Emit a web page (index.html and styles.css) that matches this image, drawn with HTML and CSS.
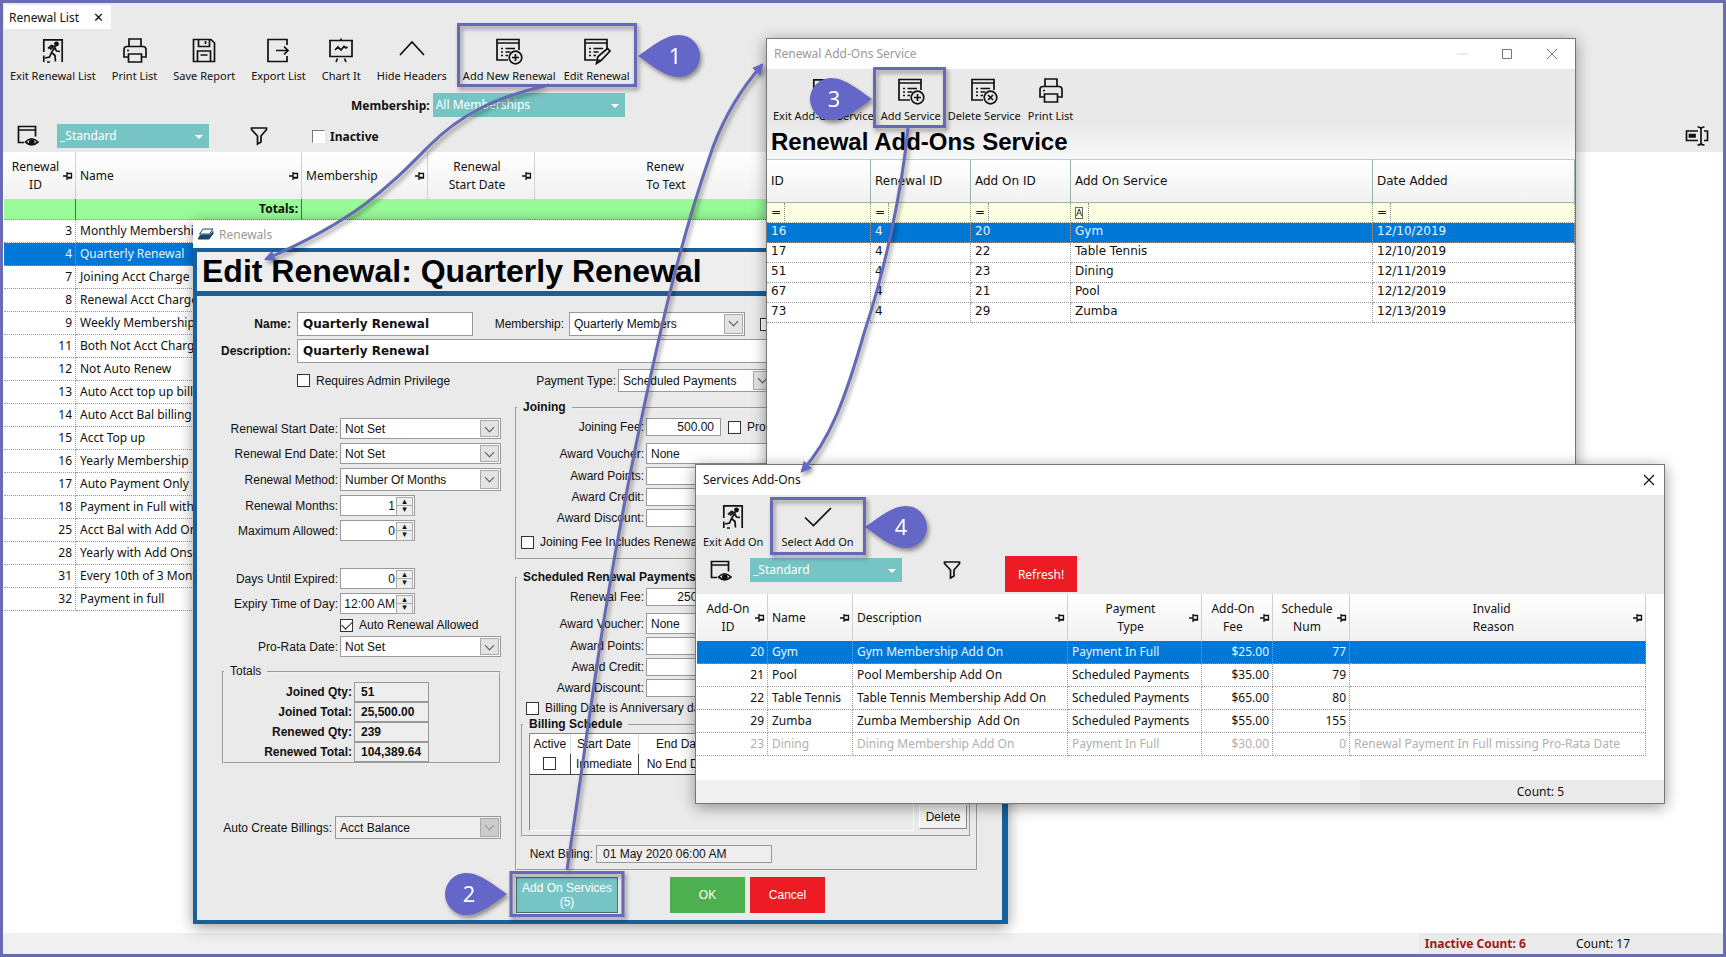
FILE: index.html
```html
<!DOCTYPE html>
<html lang="en">
<head>
  <meta charset="UTF-8" />
  <meta name="viewport" content="width=device-width, initial-scale=1.0" />
  <title>Renewal List</title>
  <link rel="stylesheet" href="styles.css">
</head>
<body>
  <svg class="sprite" aria-hidden="true">
    <symbol id="i-exit" viewBox="0 0 28 28">
      <path d="M4.800 15V2.800H23.200V25M4.800 18.500V25M8 25h3" />
      <circle cx="17.500" cy="7" r="1.600" class="solid" />
      <path d="M9 11.500l3.500-3 3.500 1.500-3.500 5.500 3.500 3 .5 6M12.500 15.500l-2 4.500-4.500 1M15.500 10.500l2 3.500 3.500.5M11 12.500l3-2.500" />
    </symbol>
    <symbol id="i-print" viewBox="0 0 28 28">
      <path d="M8 9V2h12v7M7 20H3V12.500Q3 9.500 6 9.500H22Q25 9.500 25 12.500V20H21M7.500 17h13v8h-13z" />
      <path d="M6 13.500h2" />
    </symbol>
    <symbol id="i-save" viewBox="0 0 28 28">
      <path d="M3.500 2.500H21L24.500 6V24.500H3.500zM8.500 2.500V9.500H19.500V2.500M15.500 4v3M7.500 24.500V14H20.500V24.500M10.500 18h7" />
    </symbol>
    <symbol id="i-export" viewBox="0 0 28 28">
      <path d="M23 8V2.500H4V24.500H23V19M12 13.500H24M20 9.500l4 4-4 4" />
    </symbol>
    <symbol id="i-chart" viewBox="0 0 28 28">
      <path d="M2 3.500H26M3 3.500V19.500H25V3.500M10.500 21.500L9 25M17.500 21.500L19 25M14 1.500v2M8 13l3-3 3 3 3-3.500 2 1.500 1.500-1" />
    </symbol>
    <symbol id="i-up" viewBox="0 0 28 28">
      <path d="M2 18L14 5L26 18" />
    </symbol>
    <symbol id="i-list" viewBox="0 0 28 28">
      <path d="M13 23H2V2.500H24V13M2 6H24M6 11.500h2M10.500 11.500H20M6 15h2M10.500 15h5M6 18.500h2M10.500 18.500h2.500" />
    </symbol>
    <symbol id="i-add" viewBox="0 0 28 28">
      <use href="#i-list" />
      <circle cx="20.500" cy="20.500" r="6.300" />
      <path d="M20.500 17v7M17 20.500h7" />
    </symbol>
    <symbol id="i-delete" viewBox="0 0 28 28">
      <use href="#i-list" />
      <circle cx="20.500" cy="20.500" r="6.300" />
      <path d="M18 18l5 5M23 18l-5 5" />
    </symbol>
    <symbol id="i-edit" viewBox="0 0 28 28">
      <use href="#i-list" />
      <path d="M14 23l1-3.500 9.500-8 2.500 2.500-9 9.500zM14 23l-.5 3.500 4.500-3" />
    </symbol>
    <symbol id="i-check" viewBox="0 0 28 28">
      <path d="M1 14.500l8.500 8L27 5" />
    </symbol>
    <symbol id="i-view" viewBox="0 0 22 22">
      <path d="M7 17.500H1.500V1.500H18.500V11.500M1.500 5H18.500M8.500 17q6-6.500 12.500 0q-6.500 5.500-12.500 0z" />
      <circle cx="14.800" cy="17" r="2" class="solid" />
    </symbol>
    <symbol id="i-funnel" viewBox="0 0 18 20">
      <path d="M1.500 2H16.500V3.500L11 10V16L7.500 18V10L1.500 3.500z" />
    </symbol>
    <symbol id="i-ibeam" viewBox="0 0 24 20">
      <path d="M13 5H1.500V14.500H13M19 5H22.500V14.500H19M16 2V18M12.500 1Q16 1 16 3Q16 1 19.500 1M12.500 19Q16 19 16 17Q16 19 19.500 19M4 9.700H10" />
      <path d="M4.500 8.500h5.500v2.500h-5.500z" class="solid" />
    </symbol>
    <symbol id="i-pin" viewBox="0 0 10 8">
      <path d="M0 4H4M4 0V8M4 1.500H8.500V5.500H4M4 6H9" />
    </symbol>
  </svg>

  <div class="app">
    <div class="tabs">
      <div class="tab">Renewal List <button class="tab-close" aria-label="Close tab">✕</button></div>
    </div>

    <div class="head">
      <div class="toolbar">
        <button class="tool"><svg><use href="#i-exit" /></svg>Exit Renewal List</button>
        <button class="tool"><svg><use href="#i-print" /></svg>Print List</button>
        <button class="tool"><svg><use href="#i-save" /></svg>Save Report</button>
        <button class="tool"><svg><use href="#i-export" /></svg>Export List</button>
        <button class="tool"><svg><use href="#i-chart" /></svg>Chart It</button>
        <button class="tool"><svg><use href="#i-up" /></svg>Hide Headers</button>
        <div class="tool-group">
          <button class="tool"><svg><use href="#i-add" /></svg>Add New Renewal</button>
          <button class="tool"><svg><use href="#i-edit" /></svg>Edit Renewal</button>
        </div>
      </div>
      <div class="member-row">
        <label for="listMembership">Membership:</label>
        <span class="teal-select wide"><select id="listMembership"><option>All Memberships</option></select></span>
      </div>
      <div class="filter-row">
        <svg class="view-icon"><use href="#i-view" /></svg>
        <span class="teal-select"><select aria-label="View"><option>_Standard</option></select></span>
        <svg class="funnel-icon"><use href="#i-funnel" /></svg>
        <input type="checkbox" class="sunken" id="inactive">
        <label for="inactive">Inactive</label>
        <svg class="ibeam-icon"><use href="#i-ibeam" /></svg>
      </div>
    </div>

    <div class="list">
      <table class="grid renewal-grid">
        <colgroup><col class="c-id"><col class="c-name"><col class="c-member"><col class="c-start"><col class="c-text"></colgroup>
        <thead>
          <tr>
            <th><div class="th center"><span>Renewal<br>ID</span><svg><use href="#i-pin" /></svg></div></th>
            <th><div class="th"><span>Name</span><svg><use href="#i-pin" /></svg></div></th>
            <th><div class="th"><span>Membership</span><svg><use href="#i-pin" /></svg></div></th>
            <th><div class="th center"><span>Renewal<br>Start Date</span><svg><use href="#i-pin" /></svg></div></th>
            <th><div class="th center"><span class="left">Renew<br>To Text</span></div></th>
          </tr>
          <tr class="totals-row"><td></td><td class="num">Totals:</td><td></td><td></td><td></td></tr>
        </thead>
        <tbody>
          <tr><td class="num">3</td><td>Monthly Membership</td><td></td><td></td><td></td></tr>
          <tr class="selected"><td class="num">4</td><td>Quarterly Renewal</td><td></td><td></td><td></td></tr>
          <tr><td class="num">7</td><td>Joining Acct Charge</td><td></td><td></td><td></td></tr>
          <tr><td class="num">8</td><td>Renewal Acct Charge</td><td></td><td></td><td></td></tr>
          <tr><td class="num">9</td><td>Weekly Membership</td><td></td><td></td><td></td></tr>
          <tr><td class="num">11</td><td>Both Not Acct Charge</td><td></td><td></td><td></td></tr>
          <tr><td class="num">12</td><td>Not Auto Renew</td><td></td><td></td><td></td></tr>
          <tr><td class="num">13</td><td>Auto Acct top up billing</td><td></td><td></td><td></td></tr>
          <tr><td class="num">14</td><td>Auto Acct Bal billing</td><td></td><td></td><td></td></tr>
          <tr><td class="num">15</td><td>Acct Top up</td><td></td><td></td><td></td></tr>
          <tr><td class="num">16</td><td>Yearly Membership</td><td></td><td></td><td></td></tr>
          <tr><td class="num">17</td><td>Auto Payment Only</td><td></td><td></td><td></td></tr>
          <tr><td class="num">18</td><td>Payment in Full with</td><td></td><td></td><td></td></tr>
          <tr><td class="num">25</td><td>Acct Bal with Add On</td><td></td><td></td><td></td></tr>
          <tr><td class="num">28</td><td>Yearly with Add Ons</td><td></td><td></td><td></td></tr>
          <tr><td class="num">31</td><td>Every 10th of 3 Months</td><td></td><td></td><td></td></tr>
          <tr><td class="num">32</td><td>Payment in full</td><td></td><td></td><td></td></tr>
        </tbody>
      </table>
    </div>

    <div class="statusbar">
      <span class="inactive-count">Inactive Count: 6</span>
      <span class="count">Count: 17</span>
    </div>

    <!-- Edit renewal window -->
    <div class="window win-edit">
      <div class="titlebar muted">
        <svg class="logo" viewBox="0 0 16 12"><path d="M5 1H15L11.500 6H1.500z" class="logo-top" /><path d="M3.500 7H12L15 3.500V5.500L11 11H0L2.500 7z" class="logo-base" /></svg>
        Renewals
      </div>
      <form class="edit-frame">
        <h1>Edit Renewal: Quarterly Renewal</h1>
        <div class="edit-body">
          <div class="row top">
            <label class="bold" for="rName">Name:</label>
            <input class="strong name" id="rName" value="Quarterly Renewal">
            <label class="second" for="rMember">Membership:</label>
            <span class="combo tall name"><select id="rMember"><option>Quarterly Members</option></select></span>
            <input type="checkbox" class="after-combo" aria-label="Membership option">
          </div>
          <div class="row top">
            <label class="bold" for="rDesc">Description:</label>
            <input class="strong desc" id="rDesc" value="Quarterly Renewal">
          </div>
          <div class="row top admin-row">
            <label class="check"><input type="checkbox"> Requires Admin Privilege</label>
            <label class="push" for="rPay">Payment Type:</label>
            <span class="combo tall pay"><select id="rPay"><option>Scheduled Payments</option></select></span>
          </div>

          <div class="columns">
            <div class="col-left">
              <div class="row"><label for="sDate">Renewal Start Date:</label><span class="combo"><select id="sDate"><option>Not Set</option></select></span></div>
              <div class="row"><label for="eDate">Renewal End Date:</label><span class="combo"><select id="eDate"><option>Not Set</option></select></span></div>
              <div class="row"><label for="method">Renewal Method:</label><span class="combo tall"><select id="method"><option>Number Of Months</option></select></span></div>
              <div class="row"><label for="months">Renewal Months:</label><span class="spin"><input id="months" value="1"></span></div>
              <div class="row"><label for="maxAllowed">Maximum Allowed:</label><span class="spin"><input id="maxAllowed" value="0"></span></div>
              <div class="row spaced"><label for="days">Days Until Expired:</label><span class="spin"><input id="days" value="0"></span></div>
              <div class="row"><label for="expiry">Expiry Time of Day:</label><span class="spin"><input id="expiry" value="12:00 AM"></span></div>
              <div class="row check-row"><label class="check"><input type="checkbox" checked> Auto Renewal Allowed</label></div>
              <div class="row"><label for="prorata">Pro-Rata Date:</label><span class="combo"><select id="prorata"><option>Not Set</option></select></span></div>
              <fieldset class="totals">
                <legend>Totals</legend>
                <div class="row"><label for="t1">Joined Qty:</label><input id="t1" readonly value="51"></div>
                <div class="row"><label for="t2">Joined Total:</label><input id="t2" readonly value="25,500.00"></div>
                <div class="row"><label for="t3">Renewed Qty:</label><input id="t3" readonly value="239"></div>
                <div class="row"><label for="t4">Renewed Total:</label><input id="t4" readonly value="104,389.64"></div>
              </fieldset>
              <div class="row auto-row"><label for="auto">Auto Create Billings:</label><span class="combo tall disabled"><select id="auto" disabled><option>Acct Balance</option></select></span></div>
            </div>

            <div class="col-right">
              <fieldset class="joining">
                <legend class="bold">Joining</legend>
                <div class="row"><label for="jFee">Joining Fee:</label><input class="money" id="jFee" value="500.00"><label class="check pro"><input type="checkbox"> Pro-Rata</label></div>
                <div class="row voucher"><label for="jVoucher">Award Voucher:</label><span class="combo"><select id="jVoucher"><option>None</option></select></span></div>
                <div class="row"><label for="jPoints">Award Points:</label><input class="money" id="jPoints"></div>
                <div class="row"><label for="jCredit">Award Credit:</label><input class="money" id="jCredit"></div>
                <div class="row"><label for="jDiscount">Award Discount:</label><input class="money" id="jDiscount"></div>
                <label class="check"><input type="checkbox"> Joining Fee Includes Renewal</label>
              </fieldset>
              <fieldset class="scheduled">
                <legend class="bold">Scheduled Renewal Payments</legend>
                <div class="row"><label for="sFee">Renewal Fee:</label><input class="money" id="sFee" value="250.00"></div>
                <div class="row voucher"><label for="sVoucher">Award Voucher:</label><span class="combo"><select id="sVoucher"><option>None</option></select></span></div>
                <div class="row"><label for="sPoints">Award Points:</label><input class="money" id="sPoints"></div>
                <div class="row"><label for="sCredit">Award Credit:</label><input class="money" id="sCredit"></div>
                <div class="row"><label for="sDiscount">Award Discount:</label><input class="money" id="sDiscount"></div>
                <label class="check"><input type="checkbox"> Billing Date is Anniversary date</label>
                <fieldset class="billing">
                  <legend class="bold">Billing Schedule</legend>
                  <div class="schedule">
                    <table>
                      <colgroup><col class="s-active"><col class="s-start"><col class="s-end"><col></colgroup>
                      <thead><tr><th>Active</th><th>Start Date</th><th>End Date</th><th></th></tr></thead>
                      <tbody><tr><td><input type="checkbox" aria-label="Active"></td><td>Immediate</td><td>No End Date</td><td></td></tr></tbody>
                    </table>
                  </div>
                  <button type="button" class="delete">Delete</button>
                </fieldset>
                <div class="row next"><label for="next">Next Billing:</label><input id="next" readonly value="01 May 2020 06:00 AM"></div>
              </fieldset>
            </div>
          </div>

          <div class="actions">
            <button type="button" class="btn addon">Add On Services<br>(5)</button>
            <button type="button" class="btn ok">OK</button>
            <button type="button" class="btn cancel">Cancel</button>
          </div>
        </div>
      </form>
    </div>

    <!-- Add-ons service window -->
    <div class="window win-addons">
      <div class="titlebar muted">
        Renewal Add-Ons Service
        <svg class="win-controls" viewBox="0 0 106 12"><path d="M1 6h11" class="faint" /><path d="M46.500 1.500h9v9h-9zM91 1l10 10M101 1L91 11" /></svg>
      </div>
      <div class="addons-head">
        <div class="toolbar">
          <button class="tool"><svg><use href="#i-exit" /></svg>Exit Add-On Service</button>
          <button class="tool"><svg><use href="#i-add" /></svg>Add Service</button>
          <button class="tool"><svg><use href="#i-delete" /></svg>Delete Service</button>
          <button class="tool"><svg><use href="#i-print" /></svg>Print List</button>
        </div>
        <h2>Renewal Add-Ons Service</h2>
      </div>
      <table class="grid addons-grid">
        <colgroup><col class="a-id"><col class="a-renewal"><col class="a-addon"><col class="a-service"><col></colgroup>
        <thead>
          <tr><th>ID</th><th>Renewal ID</th><th>Add On ID</th><th>Add On Service</th><th>Date Added</th></tr>
          <tr class="filters"><td><span>=</span></td><td><span>=</span></td><td><span>=</span></td><td><span><b>A</b></span></td><td><span>=</span></td></tr>
        </thead>
        <tbody>
          <tr class="selected"><td>16</td><td>4</td><td>20</td><td>Gym</td><td>12/10/2019</td></tr>
          <tr><td>17</td><td>4</td><td>22</td><td>Table Tennis</td><td>12/10/2019</td></tr>
          <tr><td>51</td><td>4</td><td>23</td><td>Dining</td><td>12/11/2019</td></tr>
          <tr><td>67</td><td>4</td><td>21</td><td>Pool</td><td>12/12/2019</td></tr>
          <tr><td>73</td><td>4</td><td>29</td><td>Zumba</td><td>12/13/2019</td></tr>
        </tbody>
      </table>
    </div>

    <!-- Services add-ons picker -->
    <div class="window win-services">
      <div class="titlebar">
        Services Add-Ons
        <svg class="win-close" viewBox="0 0 12 12"><path d="M1 1l10 10M11 1L1 11" /></svg>
      </div>
      <div class="services-head">
        <div class="toolbar">
          <button class="tool"><svg><use href="#i-exit" /></svg>Exit Add On</button>
          <button class="tool"><svg><use href="#i-check" /></svg>Select Add On</button>
        </div>
        <div class="filter-row">
          <svg class="view-icon"><use href="#i-view" /></svg>
          <span class="teal-select"><select aria-label="View"><option>_Standard</option></select></span>
          <svg class="funnel-icon"><use href="#i-funnel" /></svg>
          <button class="btn cancel refresh">Refresh!</button>
        </div>
      </div>
      <table class="grid services-grid">
        <colgroup><col class="v-id"><col class="v-name"><col class="v-desc"><col class="v-pay"><col class="v-fee"><col class="v-num"><col class="v-reason"></colgroup>
        <thead>
          <tr>
            <th><div class="th center"><span>Add-On<br>ID</span><svg><use href="#i-pin" /></svg></div></th>
            <th><div class="th"><span>Name</span><svg><use href="#i-pin" /></svg></div></th>
            <th><div class="th"><span>Description</span><svg><use href="#i-pin" /></svg></div></th>
            <th><div class="th center"><span>Payment<br>Type</span><svg><use href="#i-pin" /></svg></div></th>
            <th><div class="th center"><span>Add-On<br>Fee</span><svg><use href="#i-pin" /></svg></div></th>
            <th><div class="th center"><span>Schedule<br>Num</span><svg><use href="#i-pin" /></svg></div></th>
            <th><div class="th center"><span class="left">Invalid<br>Reason</span><svg><use href="#i-pin" /></svg></div></th>
          </tr>
        </thead>
        <tbody>
          <tr class="selected"><td class="num">20</td><td>Gym</td><td>Gym Membership Add On</td><td>Payment In Full</td><td class="num">$25.00</td><td class="num">77</td><td></td></tr>
          <tr><td class="num">21</td><td>Pool</td><td>Pool Membership Add On</td><td>Scheduled Payments</td><td class="num">$35.00</td><td class="num">79</td><td></td></tr>
          <tr><td class="num">22</td><td>Table Tennis</td><td>Table Tennis Membership Add On</td><td>Scheduled Payments</td><td class="num">$65.00</td><td class="num">80</td><td></td></tr>
          <tr><td class="num">29</td><td>Zumba</td><td>Zumba Membership&nbsp; Add On</td><td>Scheduled Payments</td><td class="num">$55.00</td><td class="num">155</td><td></td></tr>
          <tr class="off"><td class="num">23</td><td>Dining</td><td>Dining Membership Add On</td><td>Payment In Full</td><td class="num">$30.00</td><td class="num">0</td><td>Renewal Payment In Full missing Pro-Rata Date</td></tr>
        </tbody>
      </table>
      <div class="services-status"><span>Count: 5</span></div>
    </div>

    <!-- numbered callouts -->
    <svg class="callouts" width="1726" height="957" viewBox="0 0 1726 957">
      <defs>
        <marker id="head" viewBox="0 0 10 10" refX="8" refY="5" markerWidth="11" markerHeight="11" markerUnits="userSpaceOnUse" orient="auto"><path d="M0 0L10 5L0 10z" /></marker>
        <path id="pinL" d="M-41 0C-30-7-15-21 0-21A21 21 0 0 1 0 21C-15 21-30 7-41 0z" />
        <path id="pinR" d="M41 0C30-7 15-21 0-21A21 21 0 0 0 0 21C15 21 30 7 41 0z" />
      </defs>
      <g class="frames">
        <rect x="458.500" y="24.500" width="177" height="61" />
        <rect x="511" y="872.500" width="112" height="43" />
        <rect x="874.500" y="68.500" width="70" height="58" />
        <rect x="771.500" y="498.500" width="93" height="55" />
      </g>
      <g class="arrows">
        <path d="M549 85C495 97 460 115 430 145C390 185 360 218 266 259" />
        <path d="M567 870C590 720 600 620 637 440C660 330 680 240 713 147C725 115 740 90 762 65" />
        <path d="M908 128C902 190 885 270 865 330C845 400 830 440 802 471" />
      </g>
      <g class="pins">
        <use href="#pinL" x="679" y="56" />
        <use href="#pinR" x="466" y="894" />
        <use href="#pinR" x="831" y="99" />
        <use href="#pinL" x="906" y="527" />
      </g>
      <g class="numbers">
        <text x="675" y="64">1</text>
        <text x="469" y="902">2</text>
        <text x="834" y="107">3</text>
        <text x="901" y="535">4</text>
      </g>
    </svg>
  </div>
</body>
</html>
```

FILE: styles.css
```css
* {
  box-sizing: border-box;
}
body {
  margin: 0;
  font-family: "Noto Sans", "Open Sans", sans-serif;
  font-size: 12px;
  color: #111;
}
button, input, select {
  font: inherit;
  color: inherit;
  margin: 0;
  border-radius: 0;
}
button {
  border: none;
  background: none;
  padding: 0;
  cursor: pointer;
}
svg {
  fill: none;
  stroke: #111;
  stroke-width: 1.7;
  flex: none;
}
.solid {
  fill: #111;
}
.sprite {
  position: absolute;
  width: 0;
  height: 0;
}
.app {
  position: relative;
  display: flex;
  flex-direction: column;
  min-height: 100vh;
  border: 3px solid #6b6bb5;
  background: #fff;
  overflow: hidden;
}
.tabs {
  padding: 2px 1px 0;
  background: #eaeaea;
}
.tab {
  display: inline-flex;
  align-items: center;
  gap: 14px;
  height: 24px;
  padding: 0 7px 0 5px;
  background: #fff;
}
.tab-close {
  font-family: "DejaVu Sans", sans-serif;
  font-size: 13px;
  font-weight: bold;
}

/* toolbars */
.head {
  background: #eaeaea;
}
.toolbar {
  display: flex;
  gap: 16px;
  padding: 8px 7px 0;
}
.tool-group {
  display: flex;
  gap: 8px;
}
.tool {
  display: flex;
  flex-direction: column;
  align-items: center;
  gap: 3px;
  font-size: 11px;
  line-height: 15px;
  white-space: nowrap;
}
.tool svg {
  width: 28px;
  height: 28px;
}
.member-row {
  display: flex;
  align-items: center;
  gap: 3px;
  padding: 10px 0 0 348px;
  font-weight: bold;
}
.filter-row {
  display: flex;
  align-items: center;
  padding: 7px 14px 4px;
}
.filter-row label {
  font-weight: bold;
}
.teal-select {
  position: relative;
  display: block;
  width: 152px;
  height: 24px;
  background: #76c5c4;
  color: #fff;
  font-weight: normal;
}
.teal-select.wide {
  width: 192px;
}
.teal-select select {
  width: 100%;
  height: 100%;
  padding: 0 3px 2px;
  border: none;
  background: none;
  appearance: none;
}
.teal-select::after {
  content: "";
  position: absolute;
  right: 6px;
  top: 11px;
  border: 4px solid transparent;
  border-top-color: #fff;
  border-bottom: none;
}
.view-icon {
  width: 22px;
  height: 22px;
  margin-right: 18px;
}
.funnel-icon {
  width: 18px;
  height: 20px;
  margin: 0 44px 0 41px;
}
.ibeam-icon {
  width: 24px;
  height: 20px;
  margin-left: auto;
}
input[type="checkbox"] {
  position: relative;
  appearance: none;
  width: 13px;
  height: 13px;
  border: 1px solid #333;
  background: #fff;
  flex: none;
}
input[type="checkbox"]:checked::after {
  content: "";
  position: absolute;
  left: 1px;
  top: 1px;
  width: 9px;
  height: 5px;
  border: solid #222;
  border-width: 0 0 1px 1px;
  transform: rotate(-45deg);
}
input.sunken[type="checkbox"] {
  margin-right: 5px;
  border-color: #777 #fff #fff #777;
}

/* grids */
.list {
  flex: 1;
}
.grid {
  border-collapse: separate;
  border-spacing: 0;
  table-layout: fixed;
}
.grid th {
  height: 47px;
  padding: 0 2px 0 4px;
  border-right: 1px solid #d0d0d0;
  background: linear-gradient(#fff, #f1f1f1);
  font-weight: normal;
  line-height: 18px;
  text-align: left;
}
.th {
  display: flex;
  align-items: center;
  justify-content: space-between;
}
.th.center span {
  flex: 1;
  text-align: center;
}
.th.center .left {
  flex: none;
  margin: 0 auto;
  text-align: left;
}
.th svg {
  width: 10px;
  height: 8px;
  stroke-width: 1.3;
}
.grid td {
  height: 23px;
  padding: 0 4px 2px;
  border-right: 1px dotted #999;
  border-bottom: 1px dotted #999;
  white-space: nowrap;
  overflow: hidden;
}
.grid .num {
  padding: 0 3px 2px;
  text-align: right;
}
.grid .selected td {
  background: #0078d7;
  color: #e6f3ff;
}
.grid .off td {
  color: #b0b0b0;
}
.renewal-grid {
  width: 792px;
  margin-left: 1px;
}
.c-id { width: 72px; }
.c-name { width: 226px; }
.c-member { width: 126px; }
.c-start { width: 107px; }
.c-text { width: 261px; }
.totals-row td {
  height: 21px;
  background: #98fb98;
  border-right: 1px solid #3b7a3b;
  font-weight: bold;
}
.totals-row td:nth-child(n+3) {
  border-right: none;
}
.statusbar {
  display: flex;
  justify-content: flex-end;
  align-items: center;
  height: 21px;
  padding-right: 93px;
  background: linear-gradient(to left, #eaeaea 304px, #f0f0f0 304px);
}
.inactive-count {
  margin-right: 50px;
  color: #a01818;
  font-weight: bold;
}

/* windows */
.window {
  position: absolute;
  background: #fff;
  border: 1px solid #777;
  box-shadow: 0 3px 14px rgba(0, 0, 0, 0.4);
}
.titlebar {
  display: flex;
  align-items: center;
  height: 30px;
  padding: 0 7px 1px;
  background: #fff;
  font-size: 12px;
}
.titlebar.muted {
  color: #999;
}
.win-controls {
  width: 106px;
  height: 12px;
  margin: 0 6px 0 auto;
  stroke: #777;
  stroke-width: 1;
}
.win-controls .faint {
  stroke: #ddd;
}
.win-close {
  width: 12px;
  height: 12px;
  margin: 0 2px 0 auto;
  stroke-width: 1.2;
}

/* edit renewal */
.win-edit {
  left: 190px;
  top: 217px;
  width: 815px;
  border: none;
}
.win-edit .titlebar {
  height: 28px;
  gap: 5px;
  padding: 0 5px;
}
.logo {
  width: 16px;
  height: 12px;
  stroke: #17446f;
  stroke-width: 1;
}
.logo-base {
  fill: #17446f;
}
.edit-frame {
  border: 4px solid #17609a;
  border-right-width: 6px;
  background: #eaeaea;
  font-family: "Liberation Sans", Arial, sans-serif;
  font-size: 12px;
}
.edit-frame h1 {
  margin: 0;
  padding-left: 5px;
  height: 44px;
  border-bottom: 5px solid #17609a;
  background: #eee;
  color: #000;
  font-size: 32px;
  line-height: 38px;
}
.edit-body {
  padding: 16px 0 7px 1px;
  box-shadow: inset 0 0 0 1px #dcebf7;
}
.row {
  display: flex;
  align-items: center;
}
.row > label:first-child {
  width: 140px;
  margin-right: 2px;
  text-align: right;
  white-space: nowrap;
}
.bold,
.edit-body legend.bold {
  font-weight: bold;
}
.row.top {
  margin-bottom: 3px;
}
.row.top > label.bold {
  width: 93px;
  margin-right: 6px;
}
.edit-body input:not([type="checkbox"]) {
  height: 18px;
  padding: 0 6px;
  border: 1px solid #999;
  background: #fff;
}
.edit-body input[readonly] {
  background: #eee;
}
.edit-body input.strong {
  height: 24px;
  padding: 0 5px;
  font-family: "DejaVu Sans", Verdana, sans-serif;
  font-size: 12px;
  font-weight: bold;
}
.name {
  width: 176px;
}
.desc {
  width: 680px;
}
.second {
  width: 91px;
  margin-right: 5px;
  text-align: right;
}
.after-combo {
  margin-left: 15px;
}
.check {
  display: flex;
  align-items: center;
  gap: 6px;
  white-space: nowrap;
}
.combo {
  position: relative;
  display: block;
  width: 161px;
  height: 21px;
}
.combo.tall {
  height: 23px;
}
.combo select {
  width: 100%;
  height: 100%;
  padding: 0 4px;
  border: 1px solid #999;
  background: #fff;
  appearance: none;
}
.combo::before {
  content: "";
  position: absolute;
  right: 2px;
  top: 2px;
  bottom: 2px;
  width: 17px;
  border: 1px solid #aaa;
  background: #e3e3e3;
  pointer-events: none;
}
.combo::after {
  content: "";
  position: absolute;
  right: 8px;
  top: 6px;
  width: 6px;
  height: 6px;
  border: solid #555;
  border-width: 0 1px 1px 0;
  transform: rotate(45deg);
  pointer-events: none;
}
.combo.disabled select {
  background: #eee;
  color: #111;
  opacity: 1;
}
.combo.disabled::before {
  background: #ccc;
}
.combo.disabled::after {
  border-color: #999;
}
.combo.name {
  width: 176px;
  height: 24px;
}
.row.admin-row {
  margin: 6px 0 8px;
  padding-left: 99px;
}
.row.admin-row > label:first-child {
  width: 200px;
}
.push {
  width: 117px;
  margin-right: 2px;
  text-align: right;
}
.pay {
  width: 156px;
}
.spin {
  position: relative;
  display: block;
  width: 75px;
}
.edit-body .spin input {
  display: block;
  width: 75px;
  height: 21px;
  padding: 0 19px 0 1px;
  text-align: right;
}
.spin::before,
.spin::after {
  content: "▴";
  position: absolute;
  right: 2px;
  top: 2px;
  width: 15px;
  height: 9px;
  border: 1px solid #aaa;
  background: #eee;
  font-family: "DejaVu Sans", sans-serif;
  font-size: 9px;
  line-height: 7px;
  text-align: center;
}
.spin::after {
  content: "▾";
  top: 10px;
}
.columns {
  display: flex;
}
.col-left {
  display: flex;
  flex-direction: column;
  gap: 4px;
  width: 317px;
  padding-top: 18px;
}
.row.spaced {
  margin-top: 23px;
}
.check-row {
  height: 14px;
  padding-left: 142px;
}
.row.check-row > label {
  width: auto;
}
fieldset {
  margin: 0;
  padding: 3px 0 9px;
  border: 2px groove #eee;
  min-width: 0;
}
legend {
  padding: 0 6px;
  line-height: 15px;
}
.totals {
  width: 279px;
  margin: 3px 0 0 24px;
  padding: 3px 0 0;
}
.totals .row,
.edit-body .totals input {
  height: 20px;
  font-weight: bold;
}
.totals .row > label:first-child {
  width: 128px;
}
.edit-body .totals input {
  width: 75px;
}
.auto-row {
  margin-top: 48px;
}
.row.auto-row > label:first-child {
  width: 134px;
  margin-right: 3px;
}
.auto-row .combo {
  width: 166px;
}
.col-right {
  display: flex;
  flex-direction: column;
  gap: 10px;
  width: 463px;
}
.joining .row,
.scheduled .row {
  margin-bottom: 3px;
}
.joining .row > label:first-child,
.scheduled .row > label:first-child {
  width: 127px;
}
.edit-body .money {
  width: 75px;
  text-align: right;
}
.joining .row.voucher,
.scheduled .row.voucher {
  margin-top: 7px;
}
.pro {
  margin-left: 7px;
}
.joining > .check {
  padding: 6px 0 0 4px;
}
.scheduled > .check {
  padding: 2px 0 2px 9px;
}
.joining > .check,
.scheduled > .check {
  line-height: 13px;
}
fieldset.billing {
  display: flex;
  align-items: flex-end;
  justify-content: space-between;
  margin: 0 5px 8px 4px;
  padding: 1px 2px 4px 6px;
}
.billing legend {
  margin-left: -6px;
}
.schedule {
  width: 385px;
  height: 98px;
  border: 1px solid;
  border-color: #888 #fff #fff #888;
  overflow: hidden;
}
.schedule table {
  width: 100%;
  border-collapse: collapse;
  table-layout: fixed;
  background: #fff;
}
.schedule th,
.schedule td {
  height: 20px;
  padding: 0 3px;
  font-weight: normal;
  text-align: center;
  white-space: nowrap;
}
.schedule td {
  border-right: 1px solid #444;
  border-bottom: 1px solid #444;
}
.schedule th {
  border-right: 1px solid #ddd;
}
.schedule td input {
  display: block;
  margin: 0 auto;
}
.s-active { width: 40px; }
.s-start { width: 68px; }
.s-end { width: 86px; }
.delete {
  width: 48px;
  height: 24px;
  margin-bottom: 2px;
  border: 1px solid;
  border-color: #fff #888 #888 #fff;
  background: #f3f3f3;
}
.scheduled {
  padding-bottom: 3px;
}
.scheduled .row.next > label:first-child {
  width: 76px;
  margin-right: 3px;
}
.next input {
  width: 176px;
}
.actions {
  display: flex;
  gap: 5px;
  padding: 6px 0 0 318px;
}
.btn {
  width: 75px;
  height: 36px;
  color: #fff;
}
.addon {
  width: 102px;
  margin-right: 47px;
  border: 1px solid #4a6f6f;
  background: #76c5c4;
  line-height: 14px;
}
.ok {
  background: #4caf50;
}
.cancel {
  background: #ed1c24;
}

/* add-ons service */
.win-addons {
  left: 763px;
  top: 35px;
  width: 810px;
  min-height: 560px;
}
.addons-head {
  height: 90px;
  background: linear-gradient(#e9e9e9 60%, #f8f8f8);
}
.addons-head .toolbar {
  gap: 7px;
  padding: 8px 6px 0;
}
.addons-head h2 {
  margin: 0;
  padding-left: 4px;
  color: #000;
  font-family: "Liberation Sans", Arial, sans-serif;
  font-size: 24px;
  line-height: 38px;
}
.addons-grid {
  width: 100%;
  font-family: "DejaVu Sans", Verdana, sans-serif;
}
.addons-grid th {
  height: 44px;
  border: solid #9bb3ae;
  border-width: 1px 1px 1px 0;
  border-top-color: #b5d0dc;
}
.addons-grid td {
  height: 20px;
  line-height: 16px;
  vertical-align: top;
}
.addons-grid .filters td {
  padding-bottom: 0;
  background: #fbffdf;
}
.filters span {
  display: inline-block;
  width: 14px;
  height: 18px;
  border-right: 1px dotted #888;
  line-height: 18px;
}
.filters b {
  border: 1px solid #667;
  font-size: 9px;
  font-weight: normal;
}
.a-id { width: 104px; }
.a-renewal { width: 100px; }
.a-addon { width: 100px; }
.a-service { width: 302px; }

/* services add-ons */
.win-services {
  left: 692px;
  top: 461px;
  width: 970px;
}
.services-head {
  background: #eaeaea;
}
.services-head .toolbar {
  gap: 18px;
  padding: 8px 7px 0;
}
.services-head .filter-row {
  align-items: flex-start;
  padding: 7px 14px 2px;
}
.services-head .teal-select {
  margin-top: 2px;
}
.services-head .view-icon,
.services-head .funnel-icon {
  margin-top: 4px;
}
.refresh {
  width: 72px;
}
.services-grid {
  width: 949px;
  margin: 0 0 24px 1px;
}
.v-id { width: 71px; }
.v-name { width: 85px; }
.v-desc { width: 215px; }
.v-pay { width: 134px; }
.v-fee { width: 71px; }
.v-num { width: 77px; }
.v-reason { width: 296px; }
.services-status {
  display: flex;
  align-items: center;
  justify-content: flex-end;
  height: 23px;
  padding-right: 100px;
  background: linear-gradient(to left, #eaeaea 304px, #f0f0f0 304px);
}

/* callouts */
.callouts {
  position: absolute;
  left: -3px;
  top: -3px;
  pointer-events: none;
  filter: drop-shadow(2px 3px 2px rgba(0, 0, 0, 0.4));
}
.frames rect,
.arrows path {
  stroke: #6669b3;
  stroke-width: 3;
}
.arrows path {
  marker-end: url(#head);
}
#head path,
.pins use {
  fill: #6466c8;
  stroke: none;
}
.numbers text {
  fill: #fff;
  stroke: none;
  font-size: 22px;
  text-anchor: middle;
}
```
